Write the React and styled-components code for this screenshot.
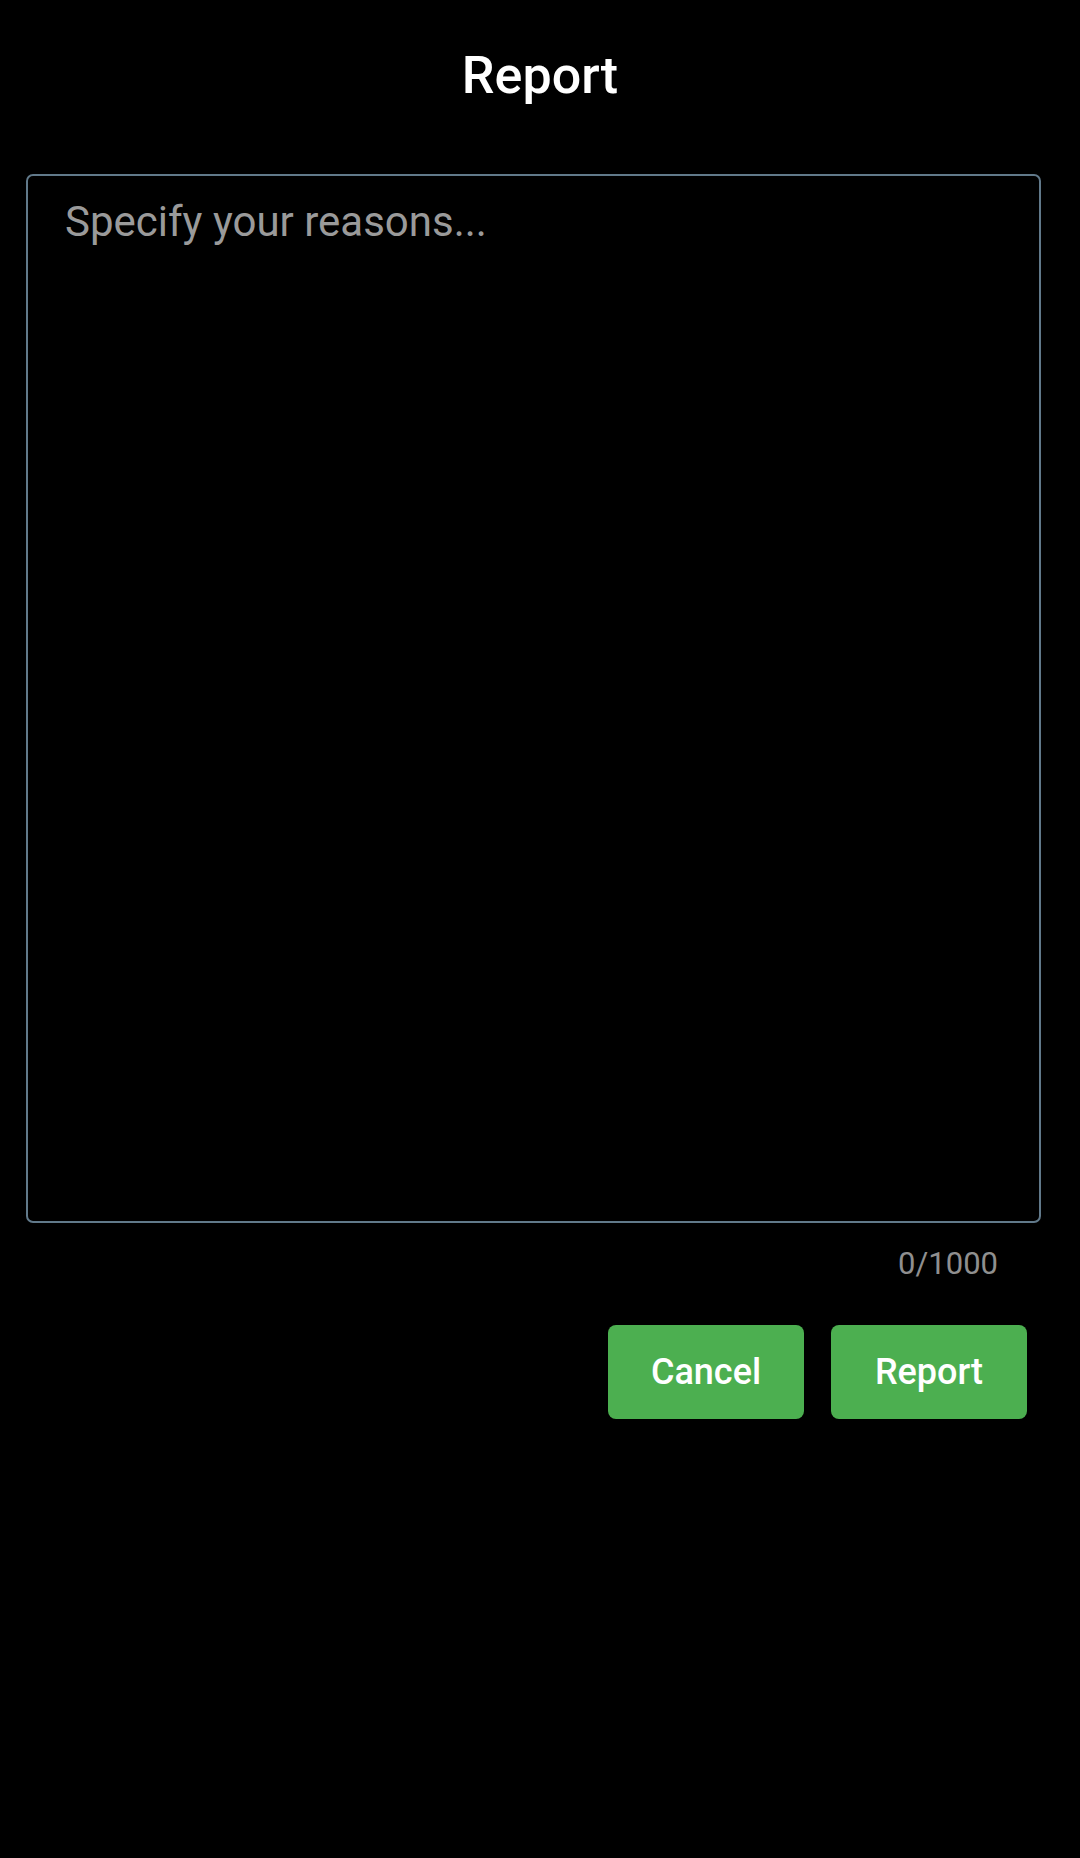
import React, { useState } from 'react'
import styled, { createGlobalStyle } from 'styled-components'

const GlobalStyle = createGlobalStyle`
  html, body {
    margin: 0;
    padding: 0;
    background: #000;
  }
  body {
    font-family: Roboto, "Noto Sans", "Liberation Sans", sans-serif;
    color: #fff;
    min-height: 1858px;
  }
`

const Page = styled.div`
  display: flex;
  flex-direction: column;
  padding: 45px 39px 0 26px;
`

const Title = styled.h1`
  margin: 0;
  font-size: 52px;
  line-height: 62px;
  font-weight: 500;
  text-align: center;
  padding-left: 13px;
`

const ReasonInput = styled.textarea`
  box-sizing: border-box;
  margin-top: 67px;
  width: 100%;
  height: 1049px;
  padding: 21px 37px;
  background: #000;
  color: #fff;
  border: 2px solid #61798a;
  border-radius: 7px;
  font-family: inherit;
  font-size: 42px;
  line-height: 1.2;
  resize: none;

  &::placeholder {
    color: #9a9a9a;
  }

  &:focus {
    outline: none;
  }
`

const Counter = styled.div`
  margin-top: 22px;
  padding-right: 43px;
  text-align: right;
  font-size: 31px;
  line-height: 37px;
  color: #8f8f8f;
`

const Actions = styled.div`
  display: flex;
  justify-content: flex-end;
  gap: 27px;
  margin-top: 43px;
  padding-right: 14px;
`

const Button = styled.button`
  width: 196px;
  height: 94px;
  border: none;
  border-radius: 8px;
  background: #4caf50;
  color: #fff;
  font-family: inherit;
  font-size: 36px;
  font-weight: 500;
  cursor: pointer;
`

const MAX = 1000

export default function App () {
  const [text, setText] = useState('')

  return (
    <Page>
      <GlobalStyle />
      <Title>Report</Title>
      <ReasonInput
        placeholder='Specify your reasons...'
        maxLength={MAX}
        value={text}
        onChange={e => setText(e.target.value)}
      />
      <Counter>{text.length}/{MAX}</Counter>
      <Actions>
        <Button>Cancel</Button>
        <Button>Report</Button>
      </Actions>
    </Page>
  )
}
